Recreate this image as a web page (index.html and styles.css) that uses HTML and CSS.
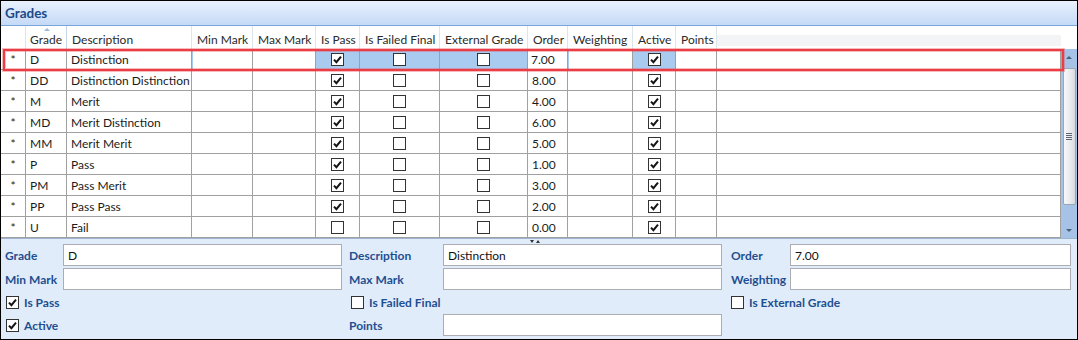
FILE: index.html
```html
<!DOCTYPE html>
<html>
<head>
<meta charset="utf-8">
<link rel="stylesheet" href="styles.css">
</head>
<body>
<div class="window">
  <div class="titlebar">Grades</div>
  <div class="gridarea">
    <div class="grid">
      <div class="row head">
        <div class="hc"></div>
        <div class="hc sorted">Grade<span class="sortarrow"></span></div>
        <div class="hc">Description</div>
        <div class="hc">Min Mark</div>
        <div class="hc">Max Mark</div>
        <div class="hc">Is Pass</div>
        <div class="hc">Is Failed Final</div>
        <div class="hc">External Grade</div>
        <div class="hc">Order</div>
        <div class="hc">Weighting</div>
        <div class="hc">Active</div>
        <div class="hc">Points</div>
        <div class="hc filler"></div>
      </div>

      <div class="row body sel">
        <div class="c ind">*</div><div class="c">D</div><div class="c">Distinction</div><div class="c edit"></div><div class="c"></div>
        <div class="c chk hl"><span class="cb"><svg viewBox="0 0 11 11"><polyline points="2,5.6 4.4,8.2 9,2.6"/></svg></span></div>
        <div class="c chk hl"><span class="cb"></span></div>
        <div class="c chk hl"><span class="cb"></span></div>
        <div class="c num">7.00</div><div class="c edit"></div>
        <div class="c chk hl"><span class="cb"><svg viewBox="0 0 11 11"><polyline points="2,5.6 4.4,8.2 9,2.6"/></svg></span></div>
        <div class="c"></div><div class="c"></div>
        <div class="selbox"></div>
      </div>

      <div class="row body">
        <div class="c ind">*</div><div class="c">DD</div><div class="c">Distinction Distinction</div><div class="c"></div><div class="c"></div>
        <div class="c chk"><span class="cb"><svg viewBox="0 0 11 11"><polyline points="2,5.6 4.4,8.2 9,2.6"/></svg></span></div>
        <div class="c chk"><span class="cb"></span></div>
        <div class="c chk"><span class="cb"></span></div>
        <div class="c num">8.00</div><div class="c"></div>
        <div class="c chk"><span class="cb"><svg viewBox="0 0 11 11"><polyline points="2,5.6 4.4,8.2 9,2.6"/></svg></span></div>
        <div class="c"></div><div class="c"></div>
      </div>

      <div class="row body">
        <div class="c ind">*</div><div class="c">M</div><div class="c">Merit</div><div class="c"></div><div class="c"></div>
        <div class="c chk"><span class="cb"><svg viewBox="0 0 11 11"><polyline points="2,5.6 4.4,8.2 9,2.6"/></svg></span></div>
        <div class="c chk"><span class="cb"></span></div>
        <div class="c chk"><span class="cb"></span></div>
        <div class="c num">4.00</div><div class="c"></div>
        <div class="c chk"><span class="cb"><svg viewBox="0 0 11 11"><polyline points="2,5.6 4.4,8.2 9,2.6"/></svg></span></div>
        <div class="c"></div><div class="c"></div>
      </div>

      <div class="row body">
        <div class="c ind">*</div><div class="c">MD</div><div class="c">Merit Distinction</div><div class="c"></div><div class="c"></div>
        <div class="c chk"><span class="cb"><svg viewBox="0 0 11 11"><polyline points="2,5.6 4.4,8.2 9,2.6"/></svg></span></div>
        <div class="c chk"><span class="cb"></span></div>
        <div class="c chk"><span class="cb"></span></div>
        <div class="c num">6.00</div><div class="c"></div>
        <div class="c chk"><span class="cb"><svg viewBox="0 0 11 11"><polyline points="2,5.6 4.4,8.2 9,2.6"/></svg></span></div>
        <div class="c"></div><div class="c"></div>
      </div>

      <div class="row body">
        <div class="c ind">*</div><div class="c">MM</div><div class="c">Merit Merit</div><div class="c"></div><div class="c"></div>
        <div class="c chk"><span class="cb"><svg viewBox="0 0 11 11"><polyline points="2,5.6 4.4,8.2 9,2.6"/></svg></span></div>
        <div class="c chk"><span class="cb"></span></div>
        <div class="c chk"><span class="cb"></span></div>
        <div class="c num">5.00</div><div class="c"></div>
        <div class="c chk"><span class="cb"><svg viewBox="0 0 11 11"><polyline points="2,5.6 4.4,8.2 9,2.6"/></svg></span></div>
        <div class="c"></div><div class="c"></div>
      </div>

      <div class="row body">
        <div class="c ind">*</div><div class="c">P</div><div class="c">Pass</div><div class="c"></div><div class="c"></div>
        <div class="c chk"><span class="cb"><svg viewBox="0 0 11 11"><polyline points="2,5.6 4.4,8.2 9,2.6"/></svg></span></div>
        <div class="c chk"><span class="cb"></span></div>
        <div class="c chk"><span class="cb"></span></div>
        <div class="c num">1.00</div><div class="c"></div>
        <div class="c chk"><span class="cb"><svg viewBox="0 0 11 11"><polyline points="2,5.6 4.4,8.2 9,2.6"/></svg></span></div>
        <div class="c"></div><div class="c"></div>
      </div>

      <div class="row body">
        <div class="c ind">*</div><div class="c">PM</div><div class="c">Pass Merit</div><div class="c"></div><div class="c"></div>
        <div class="c chk"><span class="cb"><svg viewBox="0 0 11 11"><polyline points="2,5.6 4.4,8.2 9,2.6"/></svg></span></div>
        <div class="c chk"><span class="cb"></span></div>
        <div class="c chk"><span class="cb"></span></div>
        <div class="c num">3.00</div><div class="c"></div>
        <div class="c chk"><span class="cb"><svg viewBox="0 0 11 11"><polyline points="2,5.6 4.4,8.2 9,2.6"/></svg></span></div>
        <div class="c"></div><div class="c"></div>
      </div>

      <div class="row body">
        <div class="c ind">*</div><div class="c">PP</div><div class="c">Pass Pass</div><div class="c"></div><div class="c"></div>
        <div class="c chk"><span class="cb"><svg viewBox="0 0 11 11"><polyline points="2,5.6 4.4,8.2 9,2.6"/></svg></span></div>
        <div class="c chk"><span class="cb"></span></div>
        <div class="c chk"><span class="cb"></span></div>
        <div class="c num">2.00</div><div class="c"></div>
        <div class="c chk"><span class="cb"><svg viewBox="0 0 11 11"><polyline points="2,5.6 4.4,8.2 9,2.6"/></svg></span></div>
        <div class="c"></div><div class="c"></div>
      </div>

      <div class="row body">
        <div class="c ind">*</div><div class="c">U</div><div class="c">Fail</div><div class="c"></div><div class="c"></div>
        <div class="c chk"><span class="cb"></span></div>
        <div class="c chk"><span class="cb"></span></div>
        <div class="c chk"><span class="cb"></span></div>
        <div class="c num">0.00</div><div class="c"></div>
        <div class="c chk"><span class="cb"><svg viewBox="0 0 11 11"><polyline points="2,5.6 4.4,8.2 9,2.6"/></svg></span></div>
        <div class="c"></div><div class="c"></div>
      </div>
    </div>

    <div class="scroll">
      <div class="scroll-top"></div>
      <div class="scroll-bar">
        <div class="sb-btn"><span class="tri-up"></span></div>
        <div class="thumb"><span class="grip"></span><span class="grip"></span><span class="grip"></span><span class="grip"></span></div>
        <div class="sb-space"></div>
        <div class="sb-btn"><span class="tri-down"></span></div>
      </div>
    </div>
  </div>

  <div class="form">
    <div class="splitter"><span class="s-down"></span><span class="s-up"></span></div>

    <div class="lbl">Grade</div>
    <div class="inp">D</div>
    <div class="lbl l2">Description</div>
    <div class="inp">Distinction</div>
    <div class="lbl l3">Order</div>
    <div class="inp">7.00</div>

    <div class="lbl">Min Mark</div>
    <div class="inp"></div>
    <div class="lbl l2">Max Mark</div>
    <div class="inp"></div>
    <div class="lbl l3">Weighting</div>
    <div class="inp"></div>

    <div class="check span2"><span class="cb"><svg viewBox="0 0 11 11"><polyline points="2,5.6 4.4,8.2 9,2.6"/></svg></span>Is Pass</div>
    <div class="check span2 c2"><span class="cb"></span>Is Failed Final</div>
    <div class="check span2 c3"><span class="cb"></span>Is External Grade</div>

    <div class="check span2"><span class="cb"><svg viewBox="0 0 11 11"><polyline points="2,5.6 4.4,8.2 9,2.6"/></svg></span>Active</div>
    <div class="lbl l2">Points</div>
    <div class="inp"></div>
  </div>
</div>
</body>
</html>
```

FILE: styles.css
```css
body {
  margin: 0;
  font-family: Lato, "Liberation Sans", sans-serif;
  font-size: 12px;
  color: #1b1b1b;
}

.window {
  width: 1078px;
  height: 340px;
  box-sizing: border-box;
  border: 1px solid #000;
  display: flex;
  flex-direction: column;
  background: #fff;
}

.titlebar {
  height: 24px;
  flex: none;
  border-bottom: 1px solid #7aa5da;
  background: linear-gradient(#e9f1fd, #c4daf7);
  display: flex;
  align-items: center;
  padding-left: 4px;
  font-weight: bold;
  font-size: 13.5px;
  color: #1c4a8a;
}

.gridarea {
  display: flex;
  height: 212px;
  flex: none;
}

.grid {
  width: 1060px;
  flex: none;
}

.row {
  display: grid;
  grid-template-columns: 25px 41px 125px 61px 63px 44px 80px 88px 40px 65px 43px 41px 1fr;
  height: 21px;
}

.row.head {
  height: 23px;
}

.hc {
  position: relative;
  box-sizing: border-box;
  border-right: 1px solid #dde4ec;
  padding: 3px 0 0 5px;
  display: flex;
  align-items: center;
  white-space: nowrap;
  color: #2a2a2a;
}

.hc.sorted {
  padding-left: 4px;
  border-right-color: #c3d7ee;
}

.hc.filler {
  border-right: none;
  background: linear-gradient(#fff 9px, #f3f4f6 9px, #f3f4f6 20px, #fff 20px);
}

.sortarrow {
  position: absolute;
  left: 18px;
  top: 2px;
  width: 0;
  height: 0;
  border-left: 3px solid transparent;
  border-right: 3px solid transparent;
  border-bottom: 3px solid #9bbbe0;
}

.c {
  box-sizing: border-box;
  border-right: 1px solid #a0a0a0;
  border-bottom: 1px solid #a0a0a0;
  display: flex;
  align-items: center;
  padding-left: 4px;
  white-space: nowrap;
  background: #fff;
}

.c.ind {
  padding-left: 0;
  justify-content: center;
}

.c.chk {
  padding-left: 0;
  justify-content: center;
}

.sel {
  position: relative;
}

.sel .c.hl {
  background: #a9cbef;
}

.sel .c.edit {
  box-shadow: inset 1px 0 0 #a9cbef;
}

.sel .c.num {
  padding-left: 3px;
}

.selbox {
  position: absolute;
  left: 2px;
  right: -3px;
  top: 0;
  height: 22px;
  box-sizing: border-box;
  border: 2px solid #ea3d45;
  box-shadow: 0 0 0 1px rgba(234, 61, 69, 0.35), inset 0 0 0 1px rgba(234, 61, 69, 0.35);
  pointer-events: none;
}

.cb {
  width: 13px;
  height: 13px;
  box-sizing: border-box;
  border: 1px solid #333;
  background: #fff;
  display: inline-flex;
  flex: none;
}

.cb svg {
  width: 11px;
  height: 11px;
}

.cb polyline {
  fill: none;
  stroke: #151515;
  stroke-width: 2;
}

.scroll {
  width: 16px;
  flex: none;
  display: flex;
  flex-direction: column;
}

.scroll-top {
  height: 23px;
  background: #fff;
}

.scroll-bar {
  flex: 1;
  background: #a6c3e7;
  display: flex;
  flex-direction: column;
  align-items: center;
}

.sb-btn {
  height: 16px;
  width: 16px;
  display: flex;
  align-items: center;
  justify-content: center;
  flex: none;
}

.tri-up {
  width: 0;
  height: 0;
  border-left: 3px solid transparent;
  border-right: 3px solid transparent;
  border-bottom: 3px solid #4a5f7a;
}

.tri-down {
  width: 0;
  height: 0;
  border-left: 3px solid transparent;
  border-right: 3px solid transparent;
  border-top: 3px solid #4a5f7a;
}

.thumb {
  width: 13px;
  height: 137px;
  margin-top: 3px;
  box-sizing: border-box;
  border: 1px solid #9aa6b4;
  border-radius: 2px;
  background: linear-gradient(90deg, #f7f8f9, #e8e9ec 60%, #d8dade);
  display: flex;
  flex-direction: column;
  align-items: center;
  justify-content: center;
  gap: 1px;
  flex: none;
}

.grip {
  width: 6px;
  height: 1px;
  background: #5e6672;
}

.sb-space {
  flex: 1;
}

.form {
  flex: 1;
  position: relative;
  background: #e1ecfa;
  border-top: 1px solid #9fb4cf;
  box-sizing: border-box;
  padding: 5px 0 0 4px;
  display: grid;
  grid-template-columns: 58px 279px 101px 279px 68px 281px;
  grid-template-rows: 22px 22px 20px 22px;
  row-gap: 2px;
  align-content: start;
}

.splitter {
  position: absolute;
  left: 529px;
  top: 1px;
  display: flex;
  gap: 2px;
}

.s-down {
  width: 0;
  height: 0;
  border-left: 2px solid transparent;
  border-right: 2px solid transparent;
  border-top: 3px solid #333;
}

.s-up {
  width: 0;
  height: 0;
  border-left: 2px solid transparent;
  border-right: 2px solid transparent;
  border-bottom: 3px solid #333;
}

.lbl {
  display: flex;
  align-items: center;
  font-weight: bold;
  color: #1f4f90;
  white-space: nowrap;
  padding-top: 1px;
}

.lbl.l2 {
  padding-left: 7px;
}

.lbl.l3 {
  padding-left: 9px;
}

.inp {
  box-sizing: border-box;
  border: 1px solid #abadb3;
  background: #fff;
  height: 22px;
  padding: 0 4px;
  display: flex;
  align-items: center;
  color: #111;
}

.check {
  display: flex;
  align-items: center;
  gap: 5px;
  font-weight: bold;
  color: #1f4f90;
  padding-left: 1px;
  white-space: nowrap;
}

.check.span2 {
  grid-column: span 2;
}

.check.c2 {
  padding-left: 9px;
  grid-column: 3 / span 2;
}

.check.c3 {
  padding-left: 9px;
  grid-column: 5 / span 2;
}
```
